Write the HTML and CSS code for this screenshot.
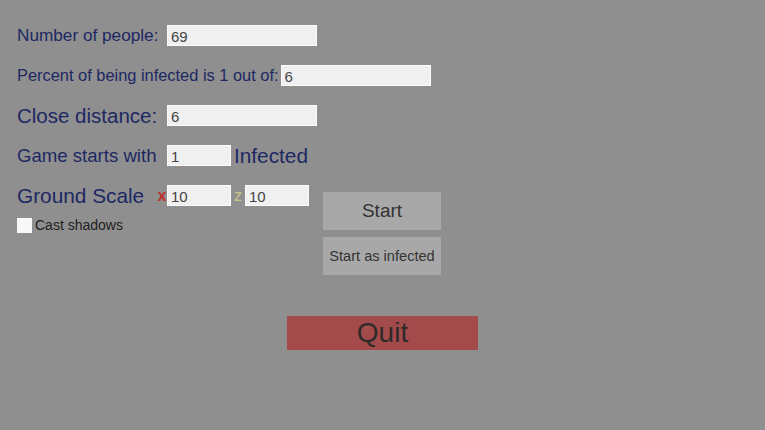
FILE: index.html
```html
<!DOCTYPE html>
<html lang="en">
<head>
    <meta charset="UTF-8">
    <title>Infection settings</title>
    <link rel="stylesheet" href="styles.css">
</head>
<body>
<div class="menu">
    <div class="row">
        <span class="label size-17">Number of people:</span>
        <input class="field wide" type="text" value="69">
    </div>
    <div class="row">
        <span class="label auto size-16">Percent of being infected is 1 out of:</span>
        <input class="field wide" type="text" value="6">
    </div>
    <div class="row">
        <span class="label size-20">Close distance:</span>
        <input class="field wide" type="text" value="6">
    </div>
    <div class="row">
        <span class="label size-19">Game starts with</span>
        <input class="field short" type="text" value="1">
        <span class="label auto size-21 after">Infected</span>
    </div>

    <div class="lower">
        <div class="lower-left">
            <div class="row">
                <span class="label scale size-21">Ground Scale</span>
                <span class="axis x">x</span>
                <input class="field short" type="text" value="10">
                <span class="axis z">z</span>
                <input class="field short" type="text" value="10">
            </div>
            <label class="check">
                <span class="box"></span>
                <span>Cast shadows</span>
            </label>
        </div>
        <div class="buttons">
            <button class="button start">Start</button>
            <button class="button start-infected">Start as infected</button>
        </div>
    </div>

    <div class="quit-wrapper">
        <button class="button quit">Quit</button>
    </div>
</div>
</body>
</html>
```

FILE: styles.css
```css
html, body {
    width: 100%;
    height: 100%;
    padding: 0;
    margin: 0;
    overflow: hidden;
    background: #8f8f8f;
    font-family: "Liberation Sans", Arial, sans-serif;
}

.menu {
    padding: 25px 0 0 17px;
    display: flex;
    flex-direction: column;
    gap: 19px;
}

.row {
    display: flex;
    align-items: center;
    height: 21px;
}

.label {
    width: 150px;
    flex: none;
    color: #1d2863;
    white-space: nowrap;
}

.label.auto {
    width: auto;
    margin-right: 2px;
}

.label.after {
    margin-left: 3px;
}

.label.scale {
    width: 140px;
}

.size-16 { font-size: 16.4px; }
.size-17 { font-size: 17.2px; }
.size-19 { font-size: 18.6px; }
.size-20 { font-size: 20.5px; }
.size-21 { font-size: 20.8px; }

.field {
    box-sizing: border-box;
    height: 21px;
    padding: 1px 3px 0;
    border: 1px solid #fbfbfb;
    background: #f0f0f0;
    color: #444;
    font-family: inherit;
    font-size: 15px;
    outline: none;
}

.field.wide {
    width: 150px;
}

.field.short {
    width: 64px;
}

.axis {
    width: 10px;
    font-size: 16px;
    text-align: center;
}

.axis.x {
    color: #c0302c;
    font-weight: bold;
}

.axis.z {
    width: 14px;
    color: #c9c58a;
}

.lower {
    display: flex;
}

.lower-left {
    width: 306px;
    display: flex;
    flex-direction: column;
}

.check {
    display: flex;
    align-items: center;
    margin-top: 11px;
    font-size: 14px;
    color: #1e1e1e;
}

.box {
    width: 15px;
    height: 15px;
    margin-right: 3px;
    background: #f8f8f8;
}

.buttons {
    display: flex;
    flex-direction: column;
    gap: 7px;
    margin-top: 7px;
}

.button {
    border: none;
    outline: none;
    padding: 0;
    font-family: inherit;
    cursor: pointer;
}

.start, .start-infected {
    width: 118px;
    height: 38px;
    background: #a8a8a8;
    color: #333;
}

.start {
    font-size: 19px;
}

.start-infected {
    font-size: 14.6px;
}

.quit-wrapper {
    display: flex;
    justify-content: center;
    margin: 22px 0 0 -17px;
}

.quit {
    width: 191px;
    height: 34px;
    background: #a34b4b;
    color: #2e2a2a;
    font-size: 28px;
    line-height: 34px;
}
```
